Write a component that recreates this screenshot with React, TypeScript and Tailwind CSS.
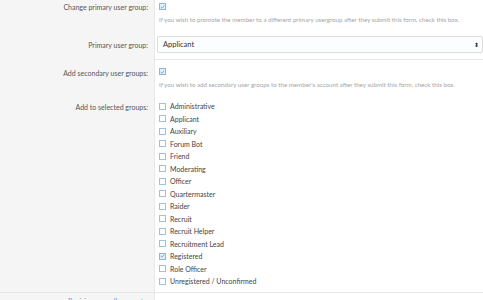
import { useState } from "react";

const groups = [
	"Administrative",
	"Applicant",
	"Auxiliary",
	"Forum Bot",
	"Friend",
	"Moderating",
	"Officer",
	"Quartermaster",
	"Raider",
	"Recruit",
	"Recruit Helper",
	"Recruitment Lead",
	"Registered",
	"Role Officer",
	"Unregistered / Unconfirmed",
];

function Box({ checked }: { checked: boolean }) {
	return (
		<span
			className={
				"flex h-[7px] w-[7px] shrink-0 items-center justify-center border " +
				(checked ? "border-[#8fb8d6] bg-[#e3eef7]" : "border-[#9cc3df] bg-white")
			}
		>
			{checked && (
				<svg viewBox="0 0 8 8" className="h-[6px] w-[6px]">
					<path d="M1.2 4.2 L3.2 6 L6.8 1.8" fill="none" stroke="#5a8fb8" strokeWidth="1.1" />
				</svg>
			)}
		</span>
	);
}

function Label({ children }: { children: React.ReactNode }) {
	return (
		<div className="w-[155px] shrink-0 border-r border-[#e8e8e8] bg-[#f5f5f5] pr-[6px] text-right text-[7px] text-[#555]">
			{children}
		</div>
	);
}

export default function App() {
	const [checked, setChecked] = useState<Record<string, boolean>>({ Registered: true });

	return (
		<div
			className="h-[300px] w-[483px] overflow-hidden bg-white"
			style={{ fontFamily: "Lato, 'Open Sans', sans-serif" }}
		>
			<div className="flex h-[30px]">
				<Label>
					<div className="pt-[2px]">Change primary user group:</div>
				</Label>
				<div className="flex flex-col pl-[4px] pt-[3px]">
					<Box checked />
					<div className="mt-[5px] text-[6.2px] text-[#a5a5a5]">
						If you wish to promote the member to a different primary usergroup after they submit this form, check this box.
					</div>
				</div>
			</div>

			<div className="flex h-[30px]">
				<Label>
					<div className="pt-[10px]">Primary user group:</div>
				</Label>
				<div className="flex flex-1 flex-col border-b border-[#e6e6e6] pl-[2px] pt-[6px]">
					<div className="flex h-[17px] items-center justify-between rounded-[2px] border border-[#dcdcdc] bg-[#fbfdfe] pl-[5px] pr-[3px] text-[7.5px] text-[#333]">
						<span>Applicant</span>
						<span className="text-[6px] leading-none text-[#333]">⬍</span>
					</div>
				</div>
			</div>

			<div className="flex h-[36px]">
				<Label>
					<div className="pt-[8px]">Add secondary user groups:</div>
				</Label>
				<div className="flex flex-col pl-[4px] pt-[8px]">
					<Box checked />
					<div className="mt-[5px] text-[6.2px] text-[#a5a5a5]">
						If you wish to add secondary user groups to the member's account after they submit this form, check this box.
					</div>
				</div>
			</div>

			<div className="flex h-[197px] border-b border-[#e6e6e6]">
				<Label>
					<div className="pt-[6px]">Add to selected groups:</div>
				</Label>
				<ul className="flex flex-col pl-[4px] pt-[4px]">
					{groups.map((g) => (
						<li
							key={g}
							className="flex h-[12.5px] cursor-pointer items-center gap-[4px] text-[7px] text-[#444]"
							onClick={() => setChecked({ ...checked, [g]: !checked[g] })}
						>
							<Box checked={!!checked[g]} />
							<span>{g}</span>
						</li>
					))}
				</ul>
			</div>

			<div className="flex h-[20px]">
				<Label>
					<div className="pt-[3px] text-[#6c9cc5]">Revision user all accounts:</div>
				</Label>
				<div className="flex-1" />
			</div>
		</div>
	);
}
